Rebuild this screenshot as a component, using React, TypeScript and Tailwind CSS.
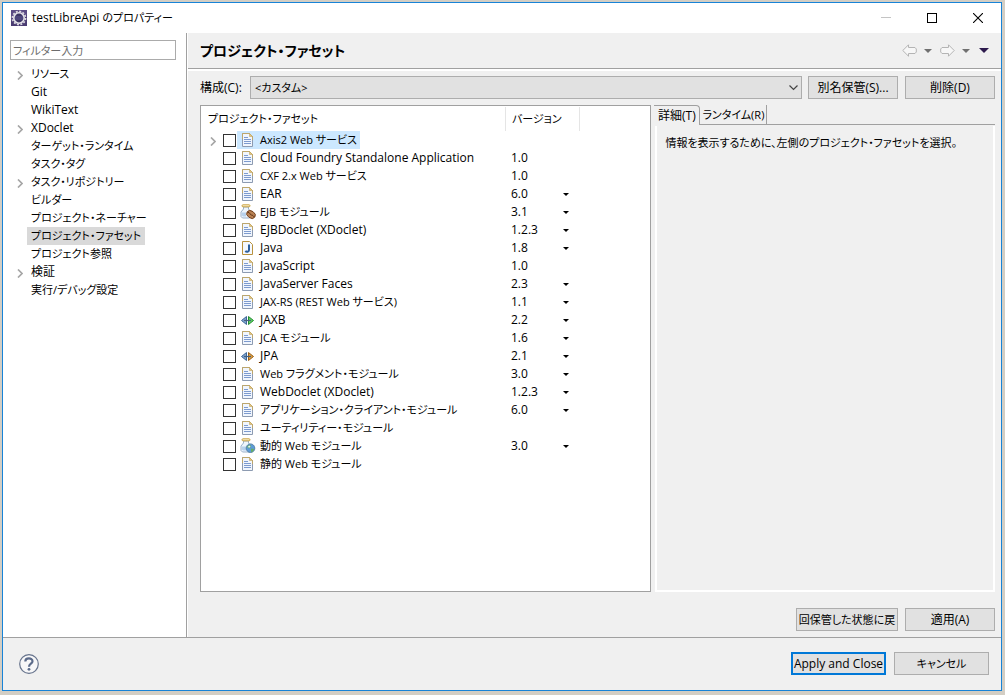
import { useState, type ReactNode } from "react";
import clsx from "clsx";

type IconKind = "doc" | "ejb" | "java" | "jaxb" | "jpa" | "web";

interface Facet {
  name: string;
  icon: IconKind;
  version?: string;
  selectable?: boolean;
  expandable?: boolean;
}

const categories = [
  { name: "リソース", expandable: true },
  { name: "Git" },
  { name: "WikiText" },
  { name: "XDoclet", expandable: true },
  { name: "ターゲット・ランタイム" },
  { name: "タスク・タグ" },
  { name: "タスク・リポジトリー", expandable: true },
  { name: "ビルダー" },
  { name: "プロジェクト・ネーチャー" },
  { name: "プロジェクト・ファセット" },
  { name: "プロジェクト参照" },
  { name: "検証", expandable: true },
  { name: "実行/デバッグ設定" },
];

const facets: Facet[] = [
  { name: "Axis2 Web サービス", icon: "doc", expandable: true },
  { name: "Cloud Foundry Standalone Application", icon: "doc", version: "1.0" },
  { name: "CXF 2.x Web サービス", icon: "doc", version: "1.0" },
  { name: "EAR", icon: "doc", version: "6.0", selectable: true },
  { name: "EJB モジュール", icon: "ejb", version: "3.1", selectable: true },
  { name: "EJBDoclet (XDoclet)", icon: "doc", version: "1.2.3", selectable: true },
  { name: "Java", icon: "java", version: "1.8", selectable: true },
  { name: "JavaScript", icon: "doc", version: "1.0" },
  { name: "JavaServer Faces", icon: "doc", version: "2.3", selectable: true },
  { name: "JAX-RS (REST Web サービス)", icon: "doc", version: "1.1", selectable: true },
  { name: "JAXB", icon: "jaxb", version: "2.2", selectable: true },
  { name: "JCA モジュール", icon: "doc", version: "1.6", selectable: true },
  { name: "JPA", icon: "jpa", version: "2.1", selectable: true },
  { name: "Web フラグメント・モジュール", icon: "doc", version: "3.0", selectable: true },
  { name: "WebDoclet (XDoclet)", icon: "doc", version: "1.2.3", selectable: true },
  { name: "アプリケーション・クライアント・モジュール", icon: "doc", version: "6.0", selectable: true },
  { name: "ユーティリティー・モジュール", icon: "doc" },
  { name: "動的 Web モジュール", icon: "web", version: "3.0", selectable: true },
  { name: "静的 Web モジュール", icon: "doc" },
];

const labelSize = (text: string) => (/[\u3040-\u30ff]/.test(text) ? "text-[11px] leading-[18px]" : "text-[12px] leading-[18px]");

function Chevron() {
  return (
    <svg width="6" height="9" viewBox="0 0 6 9" fill="none" stroke="#a6a6a6" strokeWidth="1.7">
      <path d="M1 0.5L5 4.5L1 8.5" />
    </svg>
  );
}

function EclipseIcon() {
  return (
    <svg width="16" height="16" viewBox="0 0 16 16" className="shrink-0">
      <rect width="16" height="16" fill="#4a3b72" />
      <path d="M0 0h16v5L0 11z" fill="#6b5b95" opacity="0.5" />
      <circle cx="8" cy="8" r="6.6" fill="none" stroke="#dcdae0" strokeWidth="1.6" strokeDasharray="2 1.456" />
      <circle cx="8" cy="8" r="5.2" fill="#3d3566" stroke="#e6e4ea" strokeWidth="1.6" />
      <path d="M4 7h8M4 9h8" stroke="#6a63a0" strokeWidth="0.8" />
    </svg>
  );
}

function Jar({ children }: { children: ReactNode }) {
  return (
    <svg width="16" height="16" viewBox="0 0 16 16">
      <path d="M3.5 3h5v2l2.5 3v4.5l-1.5 1.5h-7L1 12.5V8l2.5-3z" fill="#eef5fc" stroke="#8ea8c4" strokeWidth="0.9" />
      <path d="M2 8.500h4v4H3l-1-1z" fill="#b7d1ec" />
      <rect x="2" y="0.8" width="8" height="2" rx="1" fill="#fdf3cf" stroke="#c9a142" strokeWidth="1" />
      {children}
    </svg>
  );
}

function FacetIcon({ kind }: { kind: IconKind }) {
  if (kind === "ejb") {
    return (
      <Jar>
        <ellipse cx="11" cy="10.500" rx="4.600" ry="3.500" transform="rotate(35 11 10.500)" fill="#b98254" stroke="#71401d" strokeWidth="0.9" />
        <path d="M7.500 8c3 .5 2.200 2.800 3.800 3s2 .8 2.800 2" fill="none" stroke="#5c3216" strokeWidth="1" />
      </Jar>
    );
  }
  if (kind === "web") {
    return (
      <Jar>
        <circle cx="10.500" cy="10.200" r="4.300" fill="#5d9bd8" stroke="#53809f" strokeWidth="0.9" />
        <path d="M7 8.500l2-1.500 2 .5-.5 2-2 1zM11 10.500l3 .5-1 2.500-2 .5z" fill="#67ae63" />
        <path d="M8 8.500l1.500-1 1 1-1.500 1.500z" fill="#e7f5ff" />
      </Jar>
    );
  }
  if (kind === "jaxb" || kind === "jpa") {
    const right = kind === "jaxb" ? "#5fd35f" : "#e0a040";
    const edge = kind === "jaxb" ? "#258a35" : "#98601b";
    return (
      <svg width="16" height="16" viewBox="0 0 16 16">
        <path d="M1.500 8.500L6.500 4.500V12.500z" fill="#7fa3d1" stroke="#3e6796" strokeWidth="1" />
        <path d="M13.500 8.500L8.500 4.500V12.500z" fill={right} stroke={edge} strokeWidth="1" />
        <path d="M4 8.500h7" stroke="#45617e" strokeWidth="1.200" />
      </svg>
    );
  }
  if (kind === "java") {
    return (
      <svg width="16" height="16" viewBox="0 0 16 16">
        <path d="M2.500 1.500h7l3 3v10h-10z" fill="#f5f9ff" stroke="#b9923e" />
        <path d="M9 4.500v5.500c0 2-2.500 2.300-3.700 1" fill="none" stroke="#2c5f9e" strokeWidth="2" />
      </svg>
    );
  }
  return (
    <svg width="16" height="16" viewBox="0 0 16 16">
      <path d="M2.500 1.500h7l3 3v10h-10z" fill="#f1f6fd" stroke="#8d9bb1" />
      <path d="M2.500 7V1.500h7l3 3V8" fill="none" stroke="#bda66c" />
      <path d="M9.500 1.500v3h3z" fill="#e3c57d" stroke="#c3a460" strokeWidth="0.6" />
      <path d="M4 5.500h4M4 7.500h7M4 9.500h7M4 11.500h7" stroke="#7d9bcf" />
    </svg>
  );
}

function Caret({ className, width, height = 4 }: { className: string; width: number; height?: number }) {
  return (
    <svg width={width} height={height} viewBox="0 0 8 4" preserveAspectRatio="none" className={className}>
      <path d="M0 0h8L4 4z" fill="currentColor" />
    </svg>
  );
}

function HistoryArrow({ flip = false }: { flip?: boolean }) {
  return (
    <svg width="15" height="13" viewBox="0 0 15 13" className={flip ? "-scale-x-100" : ""}>
      <path d="M0.800 6.500L6.500 0.800V3.500H13L14.300 5V8L13 9.500H6.500V12.200Z" fill="#f7f7f7" stroke="#b4b4b4" strokeLinejoin="round" />
    </svg>
  );
}

function PushButton({ children, className }: { children: ReactNode; className?: string }) {
  return (
    <button
      className={clsx(
        "flex h-[23px] items-center justify-center whitespace-nowrap bg-[#e1e1e1]",
        className ?? "w-[90px] border border-[#adadad]",
      )}
    >
      {children}
    </button>
  );
}

function TitleBar() {
  return (
    <header className="flex h-[30px] items-center bg-white pl-2">
      <EclipseIcon />
      <h1 className="ml-[5px] flex-1">
        testLibreApi <span className="text-[11px]">のプロパティー</span>
      </h1>
      <button aria-label="最小化" className="flex h-full w-[46px] items-center justify-center">
        <svg width="10" height="10" viewBox="0 0 10 10" stroke="#c4c4c4">
          <path d="M0 4.500h10" />
        </svg>
      </button>
      <button aria-label="最大化" className="flex h-full w-[46px] items-center justify-center">
        <svg width="10" height="10" viewBox="0 0 10 10" fill="none" stroke="#000">
          <rect x="0.500" y="0.500" width="9" height="9" />
        </svg>
      </button>
      <button aria-label="閉じる" className="flex h-full w-[46px] items-center justify-center">
        <svg width="10" height="10" viewBox="0 0 10 10" fill="none" stroke="#000" strokeWidth="1.100">
          <path d="M0 0L10 10M10 0L0 10" />
        </svg>
      </button>
    </header>
  );
}

function Sidebar() {
  const [selected, setSelected] = useState("プロジェクト・ファセット");

  return (
    <aside className="w-[185px] shrink-0 border-r border-white bg-[#a0a0a0] pr-px">
      <div className="h-full bg-white px-[7px] pt-[7px]">
        <input
          type="text"
          aria-label="フィルター入力"
          placeholder="フィルター入力"
          className="block h-5 w-[166px] border border-[#ababab] px-[2px] text-[11px] placeholder:text-[#6d6d6d] focus:outline-none"
        />
        <ul className="pt-[5px]">
          {categories.map((c) => (
            <li key={c.name} className="flex h-[18px] items-center">
              <span className="flex w-[17px] justify-center pl-[2px] pt-[2px]">{c.expandable && <Chevron />}</span>
              <button
                onClick={() => setSelected(c.name)}
                className={clsx("h-[18px] whitespace-nowrap px-1", labelSize(c.name), selected === c.name && "bg-[#d9d9d9]")}
              >
                {c.name}
              </button>
            </li>
          ))}
        </ul>
      </div>
    </aside>
  );
}

function FacetTable() {
  return (
    <div className="min-w-0 border border-[#a0a0a0] bg-white pb-[117px]">
      <table className="w-full table-fixed border-collapse text-left">
        <colgroup>
          <col className="w-[305px]" />
          <col className="w-[74px]" />
          <col />
        </colgroup>
        <thead>
          <tr className="h-[25px] text-[11px]">
            <th className="p-0 pt-px font-normal">
              <div className="h-6 border-r border-[#e5e5e5] pl-[7px] leading-6">プロジェクト・ファセット</div>
            </th>
            <th className="p-0 pt-px font-normal">
              <div className="h-6 border-r border-[#e5e5e5] pl-[6px] leading-6">バージョン</div>
            </th>
            <td />
          </tr>
        </thead>
        <tbody>
          {facets.map((f, i) => (
            <tr key={f.name} className="h-[18px]">
              <td className="p-0">
                <label className="flex h-[18px] items-center">
                  <span className="flex w-[22px] justify-center pl-[2px] pt-[2px]">{f.expandable && <Chevron />}</span>
                  <input type="checkbox" className="mt-px size-[13px] shrink-0 appearance-none border border-[#333] bg-white checked:bg-[#333]" />
                  <span className={clsx("ml-px flex h-[18px] items-center whitespace-nowrap pl-[3px] pr-[3px]", i === 0 && "bg-[#cce8ff]")}>
                    <FacetIcon kind={f.icon} />
                    <span className={clsx("ml-1", labelSize(f.name))}>{f.name}</span>
                  </span>
                </label>
              </td>
              <td className="p-0">
                <div className="flex h-[18px] items-center justify-between pl-[5px] pr-[11px]">
                  <span>{f.version}</span>
                  {f.selectable && (
                    <button aria-label={`${f.name} バージョン`} className="flex h-full items-center">
                      <Caret className="text-black" width={6} height={3} />
                    </button>
                  )}
                </div>
              </td>
              <td />
            </tr>
          ))}
        </tbody>
      </table>
    </div>
  );
}

function DetailTabs() {
  const [tab, setTab] = useState<"detail" | "runtime">("detail");

  return (
    <div className="flex min-w-0 flex-col">
      <div role="tablist" className="flex h-5">
        <button
          role="tab"
          aria-selected={tab === "detail"}
          onClick={() => setTab("detail")}
          className="w-[46px] whitespace-nowrap rounded-tr-sm border-r border-t border-[#a0a0a0]"
        >
          詳細(T)
        </button>
        <button
          role="tab"
          aria-selected={tab === "runtime"}
          onClick={() => setTab("runtime")}
          className="w-[67px] whitespace-nowrap border-b border-r border-[#a0a0a0] text-[11px]"
        >
          ランタイム(R)
        </button>
        <div className="flex-1 border-b border-[#a0a0a0]" />
      </div>
      <div role="tabpanel" className="ml-px mt-px flex-1 border-2 border-t-0 border-white px-2 pt-2 text-[11px]">
        {tab === "detail" && <p>情報を表示するために、左側のプロジェクト・ファセットを選択。</p>}
      </div>
    </div>
  );
}

function PageHeader() {
  return (
    <div className="flex h-9 items-center border-b border-[#a0a0a0] pl-3 pr-3">
      <h2 className="flex-1 text-[14px] font-bold">プロジェクト・ファセット</h2>
      <div className="flex items-center">
        <button aria-label="戻る">
          <HistoryArrow />
        </button>
        <button aria-label="戻る履歴" className="px-[7px]">
          <Caret className="text-[#707070]" width={8} />
        </button>
        <button aria-label="進む" className="ml-px">
          <HistoryArrow flip />
        </button>
        <button aria-label="進む履歴" className="px-[7px]">
          <Caret className="text-[#707070]" width={8} />
        </button>
        <button aria-label="メニュー" className="ml-[2px]">
          <Caret className="text-[#2d1a4d]" width={10} height={5} />
        </button>
      </div>
    </div>
  );
}

export default function App() {
  return (
    <div className="flex min-h-screen flex-col bg-[#d3cec4] pb-1 pl-[2px] pr-[3px] pt-[2px] font-['Open_Sans','Noto_Sans_CJK_JP',sans-serif] text-[12px] leading-[18px] text-black [font-feature-settings:'palt']">
      <div className="flex flex-1 flex-col border border-[#1883d7] bg-[#f0f0f0]">
        <TitleBar />

        <div className="flex flex-1">
          <Sidebar />
          <main className="flex min-w-0 flex-1 flex-col">
            <PageHeader />
            <div className="flex flex-1 flex-col border-t-2 border-white pb-[6px] pl-3 pr-[6px] pt-[5px]">
              <div className="flex items-center">
                <label htmlFor="config" className="w-[50px] whitespace-nowrap">
                  構成(C):
                </label>
                <div className="relative min-w-0 flex-1">
                  <select id="config" className="block h-[23px] w-full appearance-none border border-[#adadad] bg-[#e1e1e1] px-1 text-[11px]">
                    <option>&lt;カスタム&gt;</option>
                  </select>
                  <svg width="9" height="6" viewBox="0 0 9 6" fill="none" stroke="#444" strokeWidth="1.200" className="pointer-events-none absolute right-1 top-[9px]">
                    <path d="M0.500 0.500L4.500 4.500L8.500 0.500" />
                  </svg>
                </div>
                <div className="ml-[6px] flex gap-[7px]">
                  <PushButton>別名保管(S)...</PushButton>
                  <PushButton>削除(D)</PushButton>
                </div>
              </div>

              <div className="mt-[6px] grid flex-1 grid-cols-[452fr_341fr] gap-[3px]">
                <FacetTable />
                <DetailTabs />
              </div>

              <div className="mt-4 flex justify-end gap-[7px]">
                <PushButton className="w-[102px] border border-[#adadad] text-[11px]">回保管した状態に戻</PushButton>
                <PushButton>適用(A)</PushButton>
              </div>
            </div>
          </main>
        </div>

        <footer className="flex h-[53px] items-center border-t border-[#a0a0a0] pb-px pl-4 pr-3">
          <button aria-label="ヘルプ" className="mr-auto">
            <svg width="20" height="20" viewBox="0 0 20 20" fill="none">
              <circle cx="10" cy="10" r="9.300" fill="#f7f7f8" stroke="#66738c" strokeWidth="1.200" />
              <path d="M6.300 7.500C6.300 3.200 13.500 3.400 13.500 7.200C13.500 9.800 10 9.600 10 12.800" stroke="#5c6b8a" strokeWidth="2.200" />
              <circle cx="10" cy="15.300" r="1.400" fill="#5c6b8a" />
            </svg>
          </button>
          <div className="flex gap-2">
            <PushButton className="w-[95px] border-2 border-[#0078d7]">Apply and Close</PushButton>
            <PushButton className="w-[95px] border border-[#adadad] text-[11px]">キャンセル</PushButton>
          </div>
        </footer>
      </div>
    </div>
  );
}
